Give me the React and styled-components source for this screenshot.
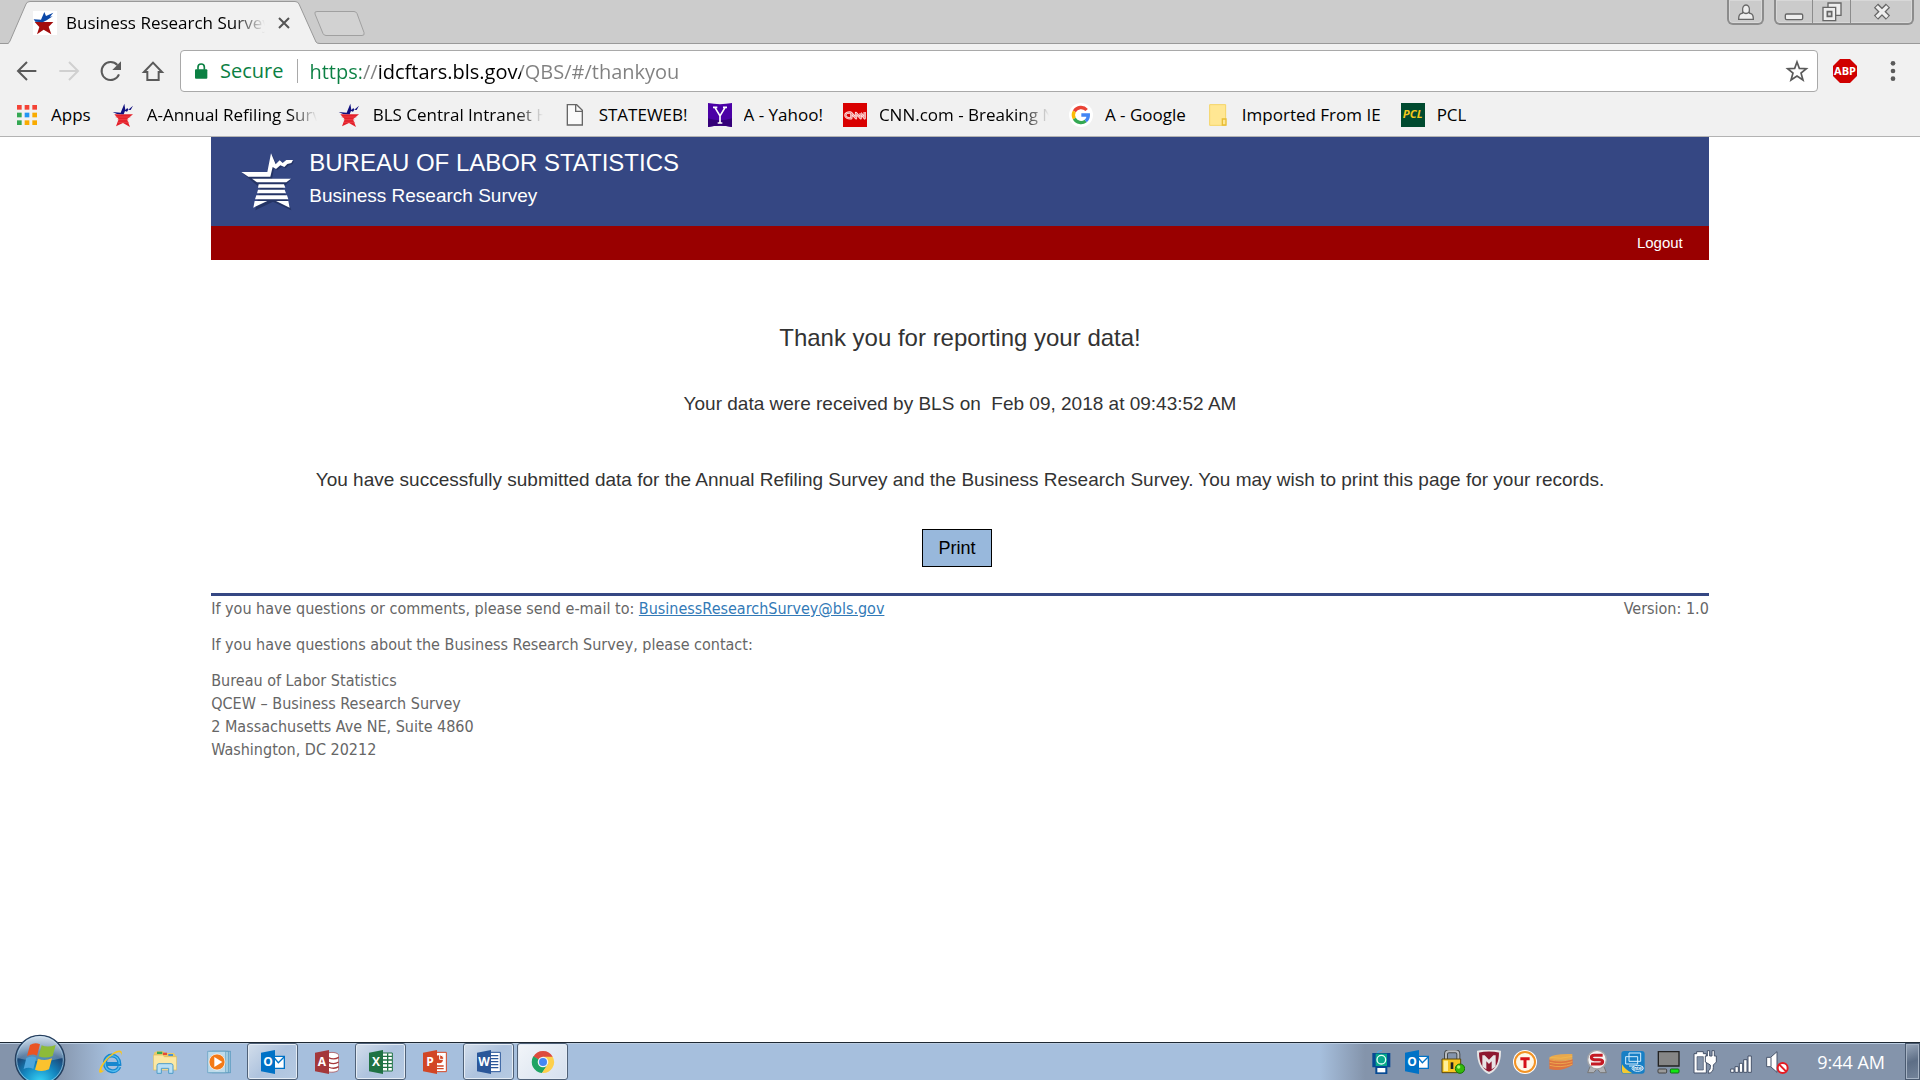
import React from "react";
import styled, { createGlobalStyle } from "styled-components";

const GlobalStyle = createGlobalStyle`
  * {
    box-sizing: border-box;
  }

  body {
    margin: 0;
    background: #fff;
    font-family: "Liberation Sans", Arial, sans-serif;
  }

  button {
    padding: 0;
    border: 0;
    background: none;
    font: inherit;
    color: inherit;
  }

  svg {
    display: block;
    flex: none;
  }
`;

const Screen = styled.div`
  display: flex;
  flex-direction: column;
  min-height: 100vh;
`;

/* ---------- browser ---------- */

const BrowserChrome = styled.header`
  background: #f1f1f1;
  border-bottom: 1px solid #b3b3b3;
  font-family: "Open Sans", "Noto Sans", sans-serif;
  color: #000;
`;

const TabStrip = styled.div`
  display: flex;
  align-items: flex-start;
  height: 44px;
  padding-left: 8px;
  background: linear-gradient(#ccc, #ccc) 0 0 / 100% 43px no-repeat, #999;
`;

const TabShape = styled.div`
  position: relative;
  display: flex;
  align-items: center;
  width: 311px;
  height: 44px;
  padding: 2px 28px 0 25px;
`;

const TabOutline = styled.svg`
  position: absolute;
  left: 0;
  top: 0;
`;

const TabTitle = styled.span`
  position: relative;
  flex: 1;
  margin-left: 9px;
  overflow: hidden;
  white-space: nowrap;
  font-size: 17px;
  line-height: 24px;
  mask-image: linear-gradient(to right, #000 84%, transparent);
`;

const TabIcon = styled.span`
  position: relative;
  background: #fff;
`;

const TabClose = styled.button`
  position: relative;
  margin-left: 12px;
`;

const NewTab = styled.button`
  margin: 10px 0 0 -6px;
`;

const WindowControls = styled.div`
  display: flex;
  gap: 10px;
  margin-left: auto;
  padding-right: 6px;
`;

const ControlGroup = styled.div`
  display: flex;
  height: 25px;
  border: 2px solid #8c8c8c;
  border-top: 0;
  border-radius: 0 0 6px 6px;
  background: #cbcbcb;
  box-shadow: inset 0 0 0 1px #d8d8d8;
`;

const ControlButton = styled.button`
  display: flex;
  align-items: center;
  justify-content: center;
  width: ${(props) => props.$width}px;

  & + & {
    border-left: 1px solid #8c8c8c;
  }
`;

const Toolbar = styled.div`
  display: flex;
  align-items: center;
  height: 54px;
  padding: 0 15px;
`;

const NavButtons = styled.div`
  display: flex;
  gap: 18px;
  margin-right: 15px;
`;

const Omnibox = styled.div`
  display: flex;
  flex: 1;
  align-items: center;
  height: 42px;
  padding: 0 8px 0 11px;
  border: 1px solid #a9a9a9;
  border-radius: 4px;
  background: #fff;
  font-size: 20px;
`;

const Secure = styled.span`
  margin-left: 10px;
  padding-right: 14px;
  border-right: 1px solid #a9a9a9;
  line-height: 24px;
  color: #0b8043;
`;

const Address = styled.input`
  flex: 1;
  min-width: 0;
  height: 36px;
  margin-left: 11px;
  padding: 0;
  border: 0;
  outline: 0;
  font: inherit;
  background: linear-gradient(
    to right,
    #0b8043 0 52px,
    #808080 52px 69px,
    #000 69px 212px,
    #808080 212px
  );
  background-clip: text;
  -webkit-background-clip: text;
  color: transparent;
`;

const Extensions = styled.div`
  display: flex;
  align-items: center;
  gap: 24px;
  margin-left: 15px;
`;

const BookmarksBar = styled.nav`
  display: flex;
  align-items: center;
  gap: 20px;
  height: 38px;
  padding: 0 15px 4px;
`;

const Bookmark = styled.a`
  display: flex;
  align-items: center;
  gap: 12px;
  color: #000;
  text-decoration: none;
`;

const BookmarkLabel = styled.span`
  width: ${(props) => (props.$faded ? "170px" : "auto")};
  overflow: hidden;
  white-space: nowrap;
  font-size: 17px;
  line-height: 24px;
  mask-image: ${(props) =>
    props.$faded ? "linear-gradient(to right, #000 84%, transparent)" : "none"};
`;

/* ---------- page ---------- */

const Page = styled.div`
  flex: 1;
  width: 78%;
  margin: 0 auto;
`;

const Banner = styled.div`
  display: flex;
  gap: 13px;
  height: 89px;
  padding: 15px 29px 0;
  background: #354783;
  color: #fff;
`;

const BannerText = styled.div`
  margin-top: -4px;
`;

const Agency = styled.h1`
  margin: 0;
  font-size: 24px;
  font-weight: 400;
  line-height: 30px;
`;

const SurveyName = styled.h2`
  margin: 0;
  font-size: 19px;
  font-weight: 400;
  line-height: 36px;
`;

const MenuBar = styled.nav`
  display: flex;
  align-items: center;
  justify-content: flex-end;
  height: 34px;
  padding: 0 26px 2px;
  background: #990000;
`;

const Logout = styled.a`
  font-size: 15px;
  color: #fff;
  text-decoration: none;
`;

const Confirmation = styled.main`
  display: flex;
  flex-direction: column;
  align-items: center;
  padding: 63px 0 26px;
  color: #333;
  text-align: center;
`;

const Heading = styled.h3`
  margin: 0;
  font-size: 24px;
  font-weight: 400;
  line-height: 30px;
`;

const Message = styled.p`
  margin: ${(props) => props.$top}px 0 0;
  font-size: 19px;
  line-height: 26px;
  white-space: pre-wrap;
`;

const PrintButton = styled.button`
  width: 70px;
  height: 38px;
  margin: 36px 6px 0 0;
  border: 1px solid #000;
  background: #98b8dc;
  font-size: 18px;
  color: #000;
`;

const Footer = styled.footer`
  padding-top: 1px;
  border-top: 3px solid #354783;
  font-family: "DejaVu Sans Condensed", Tahoma, "Noto Sans", sans-serif;
  font-size: 16px;
  line-height: 23px;
  color: #666;
`;

const FooterRow = styled.div`
  display: flex;
  justify-content: space-between;
`;

const FooterText = styled.p`
  margin: 0 0 13px;
`;

const MailLink = styled.a`
  color: #337ab7;
`;

const PostalAddress = styled.address`
  font-style: normal;
`;

/* ---------- taskbar ---------- */

const TaskbarRow = styled.footer`
  display: flex;
  align-items: center;
  height: 38px;
  padding-left: 14px;
  border-top: 1px solid #1d2833;
  box-shadow: inset 0 1px 0 #b9cbdf;
  background: linear-gradient(
    to right,
    #8494ab 0,
    #8494ab 55px,
    #a6bfdd 110px,
    #a6bfdd calc(100% - 600px),
    #8494ab calc(100% - 555px)
  );
  font-family: "Open Sans", "Noto Sans", sans-serif;
`;

const StartButton = styled.button`
  align-self: flex-end;
  height: 46px;
  margin-right: 19px;
  overflow: hidden;
`;

const Tasks = styled.div`
  display: flex;
  gap: 3px;
`;

const TaskButton = styled.button`
  display: flex;
  align-items: center;
  justify-content: center;
  width: 51px;
  height: 37px;
  border: 1px solid ${(props) => (props.$open ? "#4f6178" : "transparent")};
  border-radius: 3px;
  box-shadow: ${(props) => (props.$open ? "inset 0 0 0 1px #e4ecf5" : "none")};
  background: ${(props) =>
    props.$active
      ? "linear-gradient(135deg, #f2f5f9, #d5e0ee)"
      : props.$open
      ? "linear-gradient(135deg, #d3deeb, #aec3de 50%, #b6cae2)"
      : "none"};
`;

const Tray = styled.div`
  display: flex;
  gap: 12px;
  margin-left: auto;
`;

const Clock = styled.time`
  margin: 0 20px 0 28px;
  font-size: 18px;
  color: #fff;
`;

const ShowDesktop = styled.button`
  width: 15px;
  height: 37px;
  border: 1px solid #4a5a70;
  box-shadow: inset 0 0 0 1px #a6b3c4;
  background: linear-gradient(160deg, #9aa8bb, #5d6e86 50%, #74849a);
`;

/* ---------- icons ---------- */

const Icon = ({ size = 24, box = "0 0 72 72", children }) => (
  <svg width={size} height={size} viewBox={box} fill="none" aria-hidden="true">
    {children}
  </svg>
);

const Letters = ({ x, y, size, fill = "#fff", children }) => (
  <text
    x={x}
    y={y}
    fontSize={size}
    fill={fill}
    fontWeight="700"
    fontFamily="Open Sans, sans-serif"
    textAnchor="middle"
  >
    {children}
  </text>
);

const TabStar = () => (
  <Icon>
    <path d="M5 33h56L47 47l8 23-23-14-20 14 7-22z" fill="#a30d0d" />
    <path d="M2 25l22 1L34 3l5 12 22-10-10 12 8-1-18 12-12 6-22-2z" fill="#0b48a8" />
  </Icon>
);

const BookmarkStar = () => (
  <Icon>
    <path d="M10 34h56L48 49l9 23-21-12-21 10 8-21z" fill="#e3202a" />
    <path d="M14 42h44M20 50h32M20 58h34" stroke="#f14b50" strokeWidth="2" />
    <path d="M5 27l24 2L40 2l3 19 6-6 3 5 14-12-7 13-7-1-4 6-6-2-4 10-20-1z" fill="#10107f" />
  </Icon>
);

const BlsLogo = () => (
  <svg width="56" height="60" viewBox="120 66 168 180" aria-hidden="true">
    <g fill="#18244d" opacity="0.55" transform="translate(4 4)">
      <path d="M124 126h78l11-56 14 34 12-13 9 8 11-9h19l-5 9-11 3-9 9-12-5-13 11-10-6-6 33h58l-25 25 25 68-55-26-53 26 15-67z" />
    </g>
    <g fill="#fff">
      <path d="M124 126h78l11-56 14 33 12-12 9 8 11-9h20l-5 9-12 3-9 9-12-5-13 11-10-6-7 29h-66z" />
      <path d="M156 146h117l-14 11h-88z" />
      <path d="M176 163h76l4 10h-82z" />
      <path d="M174 179h80l4 11h-87z" />
      <path d="M169 196h92l4 12h-100z" />
      <path d="M164 213h38l-42 20zM228 213h37l4 20z" />
    </g>
  </svg>
);

const BackIcon = () => (
  <Icon>
    <path d="M64 36H10M36 9L9 36l27 27" stroke="#5a5a5a" strokeWidth="6" />
  </Icon>
);

const ForwardIcon = () => (
  <Icon>
    <path d="M7 36h54M36 9l27 27-27 27" stroke="#d0d0d0" strokeWidth="6" />
  </Icon>
);

const ReloadIcon = () => (
  <Icon>
    <path d="M60 46A27 27 0 1 1 55 18" stroke="#5a5a5a" strokeWidth="6" />
    <path d="M66 7v26H40z" fill="#5a5a5a" />
  </Icon>
);

const HomeIcon = () => (
  <Icon>
    <path d="M9 39L36 11l27 28H53v24H19V39z" stroke="#5a5a5a" strokeWidth="6" />
  </Icon>
);

const LockIcon = () => (
  <Icon size={18} box="0 0 54 54">
    <rect x="9" y="22" width="37" height="28" rx="3" fill="#0b8043" />
    <path d="M18 23v-8c0-12 19-12 19 0v8" stroke="#0b8043" strokeWidth="5" />
  </Icon>
);

const StarIcon = () => (
  <Icon>
    <path
      d="M36 9l7 19 21 1-16 13 6 21-18-12-18 12 6-21L8 29l21-1z"
      stroke="#5a5a5a"
      strokeWidth="5"
    />
  </Icon>
);

const AbpIcon = () => (
  <Icon>
    <path d="M21 0h30l21 21v30L51 72H21L0 51V21z" fill="#d00000" />
    <Letters x={36} y={48} size={33}>ABP</Letters>
  </Icon>
);

const MenuIcon = () => (
  <Icon>
    <circle cx="36" cy="13" r="7" fill="#5a5a5a" />
    <circle cx="36" cy="36" r="7" fill="#5a5a5a" />
    <circle cx="36" cy="59" r="7" fill="#5a5a5a" />
  </Icon>
);

const appColors = [
  "#f44336", "#f44336", "#f44336",
  "#34a853", "#2196f3", "#f9ab00",
  "#34a853", "#f9ab00", "#f9ab00",
];

const AppsIcon = () => (
  <Icon>
    {appColors.map((color, i) => (
      <rect
        key={i}
        x={6 + (i % 3) * 23}
        y={6 + Math.floor(i / 3) * 23}
        width="14"
        height="14"
        fill={color}
      />
    ))}
  </Icon>
);

const PageIcon = () => (
  <Icon>
    <path d="M13 5h28l17 17v44H13z" fill="#fafafa" stroke="#666" strokeWidth="4" />
    <path d="M38 5v20h20" stroke="#666" strokeWidth="4" />
  </Icon>
);

const YahooIcon = () => (
  <Icon>
    <path d="M0 0q36 7 72 0v72q-36-7-72 0z" fill="#4b00a6" />
    <path d="M0 46q36 12 72 0v26q-36-7-72 0z" fill="#340078" />
    <path d="M21 14l15 25 15-25M36 38v22M15 13h13M45 13h12M29 60h14" stroke="#fff" strokeWidth="5" />
  </Icon>
);

const CnnIcon = () => (
  <Icon>
    <path d="M0 0h72v72H0z" fill="#d90000" />
    <path
      d="M25 29c-24-4-24 19 0 17V30l14 16V30l14 16V30M53 30l12 16V27"
      stroke="#ffe1e1"
      strokeWidth="7"
      strokeLinejoin="round"
    />
    <path
      d="M25 29c-24-4-24 19 0 17V30l14 16V30l14 16V30M53 30l12 16V27"
      stroke="#d90000"
      strokeWidth="1"
    />
  </Icon>
);

const GoogleIcon = () => (
  <Icon>
    <circle cx="36" cy="36" r="36" fill="#fff" />
    <path d="M53 21A23 23 0 0 0 16 25" stroke="#ea4335" strokeWidth="10" />
    <path d="M16 25a23 23 0 0 0 0 22" stroke="#fbbc05" strokeWidth="10" />
    <path d="M16 47a23 23 0 0 0 34 7" stroke="#34a853" strokeWidth="10" />
    <path d="M50 54a23 23 0 0 0 8-18H37" stroke="#4285f4" strokeWidth="10" />
  </Icon>
);

const FolderIcon = () => (
  <Icon>
    <path d="M11 5h48v62H11z" fill="#ffe793" stroke="#f5d565" strokeWidth="3" />
    <path d="M49 66V48h11v18z" fill="#ffe793" stroke="#e8bd35" strokeWidth="4" />
  </Icon>
);

const PclIcon = () => (
  <Icon>
    <path d="M0 0h72v72H0z" fill="#004a2f" />
    <g fontStyle="italic">
      <Letters x={35} y={45} size={34} fill="#f2c81c">PCL</Letters>
    </g>
  </Icon>
);

const UserIcon = () => (
  <Icon size={18} box="0 0 54 54">
    <path
      d="M17 24c-4-24 24-24 20 0-2 6 1 7 5 8 7 2 7 8 7 17H5c0-9 0-15 7-17 4-1 7-2 5-8z"
      fill="#eee"
      stroke="#666"
      strokeWidth="4"
    />
    <path d="M17 27q10 9 20 0" stroke="#666" strokeWidth="4" />
  </Icon>
);

const MinimizeIcon = () => (
  <Icon size={20} box="0 0 60 60">
    <rect x="4" y="36" width="52" height="17" rx="4" fill="#eee" stroke="#666" strokeWidth="4" />
  </Icon>
);

const RestoreIcon = () => (
  <Icon size={20} box="0 0 60 60">
    <path d="M18 3h39v37H18z" fill="#eee" stroke="#666" strokeWidth="4" />
    <path d="M3 16h38v40H3z" fill="#eee" stroke="#666" strokeWidth="4" />
    <path d="M16 29h13v14H16z" fill="#ddd" stroke="#666" strokeWidth="5" />
  </Icon>
);

const CloseIcon = () => (
  <Icon size={18} box="0 0 54 54">
    <path d="M9 8l36 36M45 8L9 44" stroke="#666" strokeWidth="18" />
    <path d="M11 10l32 32M43 10L11 42" stroke="#eee" strokeWidth="10" />
  </Icon>
);

const StartOrb = () => (
  <svg width="52" height="46" viewBox="0 0 156 138" aria-hidden="true">
    <defs>
      <radialGradient id="orb" cx="50%" cy="95%" r="90%">
        <stop offset="0" stopColor="#38d5f7" />
        <stop offset="0.4" stopColor="#1385bf" />
        <stop offset="0.7" stopColor="#1b4878" />
        <stop offset="1" stopColor="#6f90b4" />
      </radialGradient>
      <linearGradient id="shine" x1="0" y1="0" x2="0" y2="1">
        <stop offset="0" stopColor="#e5eef6" stopOpacity="0.8" />
        <stop offset="1" stopColor="#b6cce2" stopOpacity="0.3" />
      </linearGradient>
    </defs>
    <circle cx="78" cy="78" r="74" fill="url(#orb)" stroke="#263f5e" strokeWidth="4" />
    <circle cx="78" cy="78" r="70" fill="none" stroke="#a9d5ec" strokeWidth="3" opacity="0.7" />
    <path d="M10 72a68 66 0 0 1 136 0q-68 20-136 0z" fill="url(#shine)" />
    <path d="M48 33q15-10 30-2l-9 34q-14-8-30 1z" fill="#ea5424" />
    <path d="M83 34q18 8 42-1l-9 33q-21 9-42 1z" fill="#8dbb39" />
    <path d="M37 72q16-9 30-1l-9 34q-14-8-29 0z" fill="#4da5dc" />
    <path d="M72 74q20 8 42-1l-9 33q-21 9-42 1z" fill="#fbc22e" />
  </svg>
);

const IeIcon = () => (
  <Icon>
    <path d="M61 50c-9 22-43 16-43-11 0-30 43-30 43 3H20" stroke="#1787cf" strokeWidth="12" />
    <path d="M61 50c-9 22-43 16-43-11 0-30 43-30 43 3" stroke="#55bff1" strokeWidth="4" />
    <path d="M18 59C-14 90 -1 37 43 8c18-11 31-8 23 9 3-15-12-11-24-3C13 34-4 73 18 59z" fill="#f9c51d" />
  </Icon>
);

const ExplorerIcon = () => (
  <Icon>
    <path d="M3 8l8-4h20l5 5h27l5 8v43H3z" fill="#eac967" />
    <path d="M12 5h16v7H12z" fill="#36a853" />
    <path d="M30 8h12v7H30z" fill="#e64b35" />
    <path d="M46 12h14v6H46z" fill="#4591d3" />
    <path d="M1 15h28l5 5h37v40H1z" fill="#fbe8a4" stroke="#d9b95c" strokeWidth="2" />
    <path d="M12 70V47q0-6 6-6h36q6 0 6 6v23H47V55H25v15z" fill="#b8dff5" stroke="#4e9dc8" strokeWidth="3" />
  </Icon>
);

const MediaIcon = () => (
  <Icon>
    <path d="M15 4h56v64H15z" fill="#91bed8" stroke="#4d91b6" strokeWidth="2" />
    <path d="M8 4h56v64H8z" fill="#acd3e5" stroke="#4d91b6" strokeWidth="2" />
    <path d="M2 4h54v64H2z" fill="#bddbeb" stroke="#5b9abd" strokeWidth="2" />
    <circle cx="30" cy="36" r="24" fill="#f37a16" stroke="#fff" strokeWidth="2" />
    <path d="M22 21l24 15-24 15z" fill="#fff" />
  </Icon>
);

const OfficeIcon = ({ color, letter, children }) => (
  <Icon>
    {children}
    <path d="M0 8l42-8v72L0 64z" fill={color} />
    <Letters x={21} y={49} size={36}>{letter}</Letters>
  </Icon>
);

const OutlookIcon = () => (
  <OfficeIcon color="#0072c6" letter="O">
    <path d="M38 19h32v36H38z" fill="#fff" stroke="#0072c6" strokeWidth="4" />
    <path d="M40 24l12 14 18-18" stroke="#0072c6" strokeWidth="4" />
  </OfficeIcon>
);

const AccessIcon = () => (
  <OfficeIcon color="#a4373a" letter="A">
    <path d="M35 12c10-9 36-4 36 4v42c0 8-26 12-36 5z" fill="#fff" stroke="#a4373a" strokeWidth="2" />
    <path d="M40 23q18 8 31-1M40 37q18 8 31-1M40 51q18 8 31-1" stroke="#a4373a" strokeWidth="4" />
  </OfficeIcon>
);

const ExcelIcon = () => (
  <OfficeIcon color="#1f7244" letter="X">
    <path d="M40 9h30v54H40z" fill="#fff" stroke="#1f7244" strokeWidth="3" />
    <path d="M42 19h27M42 30h27M42 41h27M42 52h27M56 10v52" stroke="#1f7244" strokeWidth="4" />
  </OfficeIcon>
);

const PowerPointIcon = () => (
  <OfficeIcon color="#d24625" letter="P">
    <path d="M38 7h32v58H38z" fill="#fff" stroke="#d24625" strokeWidth="3" />
    <circle cx="48" cy="28" r="12" fill="#d24625" />
    <path d="M50 28V14q12 1 13 14z" fill="#d24625" stroke="#fff" strokeWidth="3" />
    <path d="M42 48h20M42 56h20" stroke="#d24625" strokeWidth="4" />
  </OfficeIcon>
);

const WordIcon = () => (
  <OfficeIcon color="#2a5699" letter="W">
    <path d="M38 7h32v58H38z" fill="#fff" stroke="#2a5699" strokeWidth="3" />
    <path d="M42 17h22M42 26h22M42 35h22M42 44h22M42 53h22" stroke="#2a5699" strokeWidth="4" />
  </OfficeIcon>
);

const ChromeIcon = () => (
  <Icon>
    <path d="M36 36L7 20a33 33 0 0 1 58 0z" fill="#dd4b3e" />
    <path d="M36 36L7 19a33 33 0 0 0 26 50l19-27z" fill="#1da462" />
    <path d="M36 20h29a33 33 0 0 1-32 49l17-26z" fill="#fdd04c" />
    <circle cx="36" cy="36" r="16" fill="#f4f4f4" />
    <circle cx="36" cy="36" r="12" fill="#4587f3" />
  </Icon>
);

const BadgeIcon = () => (
  <Icon>
    <path d="M25 9q2-8 14-7" stroke="#5aa7dd" strokeWidth="4" />
    <path d="M10 9h54v43h-9v20H19V52h-9z" fill="#064a94" />
    <path d="M20 11h34v37H20z" fill="#08a88a" />
    <circle cx="37" cy="29" r="13" stroke="#e5fff8" strokeWidth="4" />
    <path d="M25 54h24v13H25z" fill="#fff" />
  </Icon>
);

const PadlockIcon = () => (
  <Icon>
    <path d="M15 29V12Q15 4 24 4h19q9 0 9 8v17" stroke="#44494c" strokeWidth="12" />
    <path d="M15 29V12Q15 4 24 4h19q9 0 9 8v17" stroke="#b9bcc0" strokeWidth="6" />
    <path d="M3 27h56v41H3z" fill="#f7c520" stroke="#5c480c" strokeWidth="3" />
    <path d="M8 32h13v31H8z" fill="#fff099" />
    <path d="M29 37h8v20h-8z" fill="#222" />
    <circle cx="57" cy="56" r="14" fill="#35b90c" stroke="#167607" strokeWidth="3" />
    <circle cx="53" cy="51" r="5" fill="#a9ff6c" />
  </Icon>
);

const ShieldIcon = () => (
  <Icon>
    <path d="M3 5q33-7 66 0c0 32-8 52-33 64C11 57 3 37 3 5z" fill="#8e1830" stroke="#e5e5e5" strokeWidth="6" />
    <path d="M16 50V16h7l13 13 13-13h7v34l-12 8V34l-8 8-8-8v24z" fill="#e8e4e5" />
  </Icon>
);

const TIcon = () => (
  <Icon>
    <circle cx="36" cy="36" r="36" fill="#fff" />
    <circle cx="36" cy="36" r="30" fill="#fff8e8" stroke="#f39324" strokeWidth="6" />
    <path d="M22 26h28M36 26v28" stroke="#d51119" strokeWidth="9" />
  </Icon>
);

const CoilIcon = () => (
  <Icon>
    <path d="M1 23q12-13 69-11v14q-35 11-69 3z" fill="#e8a94e" />
    <path d="M1 27q35 11 70 0v18q-35 22-70 12z" fill="#dd7440" />
    <path d="M2 22q33 7 68-3M2 29q33 9 68-2M2 37q33 9 68-2M2 46q33 9 68-3" stroke="#f5bd51" strokeWidth="2" />
  </Icon>
);

const SealIcon = () => (
  <Icon>
    <path d="M15 50L8 68h18l10-12 10 12h18l-7-18z" fill="#adb0b5" stroke="#777" strokeWidth="3" />
    <circle cx="36" cy="29" r="28" fill="#f4f4f4" stroke="#a4a6aa" strokeWidth="4" />
    <path d="M53 16H28q-9 0-9 6t9 7h15q10 0 10 6t-10 7H18" stroke="#c41a24" strokeWidth="9" />
  </Icon>
);

const IntelIcon = () => (
  <Icon>
    <rect x="1" y="3" width="70" height="68" rx="9" fill="#187fc5" />
    <path d="M3 43q10 17 31 27H11q-8 0-8-8z" fill="#f4c931" />
    <path d="M24 9h35v25H24zM14 20h36v22H14z" stroke="#d5efff" strokeWidth="3" />
    <path d="M24 48h16" stroke="#d5efff" strokeWidth="3" />
    <ellipse cx="50" cy="55" rx="17" ry="9" fill="#1475bb" stroke="#d5efff" strokeWidth="3" />
    <Letters x={50} y={60} size={13}>intel</Letters>
  </Icon>
);

const MonitorIcon = () => (
  <Icon>
    <path d="M4 5h62v43H4z" fill="#868686" stroke="#222" strokeWidth="4" />
    <rect x="3" y="57" width="26" height="12" rx="3" fill="#9a9a9a" stroke="#444" strokeWidth="3" />
    <rect x="40" y="57" width="26" height="12" rx="3" fill="#10e710" stroke="#166c16" strokeWidth="3" />
  </Icon>
);

const PowerIcon = () => (
  <Icon>
    <path d="M11 5h20v6h9v58H3V11h8z" fill="#fff" stroke="#46536a" strokeWidth="3" />
    <path d="M12 20h19v40H12z" fill="#8494ab" stroke="#46536a" strokeWidth="2" />
    <path d="M43 2h7v16h7V2h7v16h6v18l-9 9v8q0 15-15 17v-8q6-2 6-9v-8l-15-9V18h6z" fill="#fff" stroke="#46536a" strokeWidth="3" />
  </Icon>
);

const SignalIcon = () => (
  <Icon>
    <g fill="#fff" stroke="#46536a" strokeWidth="3">
      <path d="M5 57h10v10H5zM18 50h10v17H18zM31 40h10v27H31zM44 29h10v38H44zM57 18h10v49H57z" />
    </g>
  </Icon>
);

const MutedIcon = () => (
  <Icon>
    <path d="M5 22h12L36 5v62L17 50H5z" fill="#fff" stroke="#46536a" strokeWidth="3" />
    <path d="M18 22v28" stroke="#46536a" strokeWidth="3" />
    <circle cx="53" cy="54" r="15" fill="#fff" stroke="#e51b22" strokeWidth="6" />
    <path d="M43 44l20 20" stroke="#e51b22" strokeWidth="6" />
  </Icon>
);

/* ---------- data ---------- */

const bookmarks = [
  { label: "Apps", icon: AppsIcon },
  { label: "A-Annual Refiling Survey", icon: BookmarkStar, faded: true },
  { label: "BLS Central Intranet Home", icon: BookmarkStar, faded: true },
  { label: "STATEWEB!", icon: PageIcon },
  { label: "A - Yahoo!", icon: YahooIcon },
  { label: "CNN.com - Breaking News", icon: CnnIcon, faded: true },
  { label: "A - Google", icon: GoogleIcon },
  { label: "Imported From IE", icon: FolderIcon },
  { label: "PCL", icon: PclIcon },
];

const tasks = [
  { name: "Internet Explorer", icon: IeIcon },
  { name: "Windows Explorer", icon: ExplorerIcon },
  { name: "Media Player", icon: MediaIcon },
  { name: "Outlook", icon: OutlookIcon, open: true },
  { name: "Access", icon: AccessIcon },
  { name: "Excel", icon: ExcelIcon, open: true },
  { name: "PowerPoint", icon: PowerPointIcon },
  { name: "Word", icon: WordIcon, open: true },
  { name: "Chrome", icon: ChromeIcon, open: true, active: true },
];

const trayIcons = [
  BadgeIcon,
  OutlookIcon,
  PadlockIcon,
  ShieldIcon,
  TIcon,
  CoilIcon,
  SealIcon,
  IntelIcon,
  MonitorIcon,
  PowerIcon,
  SignalIcon,
  MutedIcon,
];

/* ---------- sections ---------- */

const Tabs = () => (
  <TabStrip>
    <TabShape>
      <TabOutline width="312" height="44" viewBox="0 0 312 44" aria-hidden="true">
        <path
          d="M0 43.5Q1 43 2 41L18 4q1-2.500 4-2.500h265q3 0 4 2.500l17 38q1 1.500 4 1.500V44H0z"
          fill="#f1f1f1"
        />
        <path
          d="M0 43.500Q1 43 2 41L18 4q1-2.500 4-2.500h265q3 0 4 2.500l17 38q1 1.500 4 1.500"
          fill="none"
          stroke="#999"
        />
      </TabOutline>
      <TabIcon>
        <TabStar />
      </TabIcon>
      <TabTitle>Business Research Survey</TabTitle>
      <TabClose aria-label="Close tab">
        <Icon size={14} box="0 0 42 42">
          <path d="M6 6l30 30M36 6L6 36" stroke="#555" strokeWidth="6" />
        </Icon>
      </TabClose>
    </TabShape>
    <NewTab aria-label="New tab">
      <svg width="52" height="27" viewBox="0 0 52 27" aria-hidden="true">
        <path
          d="M4 1.500h37q2 0 3 2l7 19q1 3-2 3H13q-2 0-3-2L2 4q-1-2.500 2-2.500z"
          fill="#d2d2d2"
          stroke="#a0a0a0"
        />
      </svg>
    </NewTab>
    <WindowControls>
      <ControlGroup>
        <ControlButton $width={33} aria-label="Profile">
          <UserIcon />
        </ControlButton>
      </ControlGroup>
      <ControlGroup>
        <ControlButton $width={36} aria-label="Minimize">
          <MinimizeIcon />
        </ControlButton>
        <ControlButton $width={38} aria-label="Restore">
          <RestoreIcon />
        </ControlButton>
        <ControlButton $width={62} aria-label="Close window">
          <CloseIcon />
        </ControlButton>
      </ControlGroup>
    </WindowControls>
  </TabStrip>
);

const Browser = () => (
  <BrowserChrome>
    <Tabs />
    <Toolbar>
      <NavButtons>
        <button aria-label="Back"><BackIcon /></button>
        <button aria-label="Forward"><ForwardIcon /></button>
        <button aria-label="Reload"><ReloadIcon /></button>
        <button aria-label="Home"><HomeIcon /></button>
      </NavButtons>
      <Omnibox>
        <LockIcon />
        <Secure>Secure</Secure>
        <Address
          aria-label="Address"
          defaultValue="https://idcftars.bls.gov/QBS/#/thankyou"
          spellCheck={false}
        />
        <button aria-label="Bookmark this page"><StarIcon /></button>
      </Omnibox>
      <Extensions>
        <button aria-label="Adblock Plus"><AbpIcon /></button>
        <button aria-label="Menu"><MenuIcon /></button>
      </Extensions>
    </Toolbar>
    <BookmarksBar>
      {bookmarks.map(({ label, icon: BookmarkIcon, faded }) => (
        <Bookmark href="#" key={label}>
          <BookmarkIcon />
          <BookmarkLabel $faded={faded}>{label}</BookmarkLabel>
        </Bookmark>
      ))}
    </BookmarksBar>
  </BrowserChrome>
);

const ThankYou = () => (
  <Page>
    <Banner>
      <BlsLogo />
      <BannerText>
        <Agency>BUREAU OF LABOR STATISTICS</Agency>
        <SurveyName>Business Research Survey</SurveyName>
      </BannerText>
    </Banner>
    <MenuBar>
      <Logout href="#">Logout</Logout>
    </MenuBar>
    <Confirmation>
      <Heading>Thank you for reporting your data!</Heading>
      <Message $top={38}>
        {"Your data were received by BLS on  Feb 09, 2018 at 09:43:52 AM"}
      </Message>
      <Message $top={50}>
        You have successfully submitted data for the Annual Refiling Survey and the Business Research Survey. You may wish to print this page for your records.
      </Message>
      <PrintButton>Print</PrintButton>
    </Confirmation>
    <Footer>
      <FooterRow>
        <FooterText>
          If you have questions or comments, please send e-mail to:{" "}
          <MailLink href="mailto:BusinessResearchSurvey@bls.gov">
            BusinessResearchSurvey@bls.gov
          </MailLink>
        </FooterText>
        <FooterText>Version: 1.0</FooterText>
      </FooterRow>
      <FooterText>
        If you have questions about the Business Research Survey, please contact:
      </FooterText>
      <PostalAddress>
        Bureau of Labor Statistics
        <br />
        QCEW – Business Research Survey
        <br />
        2 Massachusetts Ave NE, Suite 4860
        <br />
        Washington, DC 20212
      </PostalAddress>
    </Footer>
  </Page>
);

const Taskbar = () => (
  <TaskbarRow>
    <StartButton aria-label="Start">
      <StartOrb />
    </StartButton>
    <Tasks>
      {tasks.map(({ name, icon: TaskIcon, open, active }) => (
        <TaskButton key={name} aria-label={name} $open={open} $active={active}>
          <TaskIcon />
        </TaskButton>
      ))}
    </Tasks>
    <Tray>
      {trayIcons.map((TrayIcon, i) => (
        <TrayIcon key={i} />
      ))}
    </Tray>
    <Clock>9:44 AM</Clock>
    <ShowDesktop aria-label="Show desktop" />
  </TaskbarRow>
);

const App = () => {
  return (
    <Screen>
      <GlobalStyle />
      <Browser />
      <ThankYou />
      <Taskbar />
    </Screen>
  );
};

export default App;
